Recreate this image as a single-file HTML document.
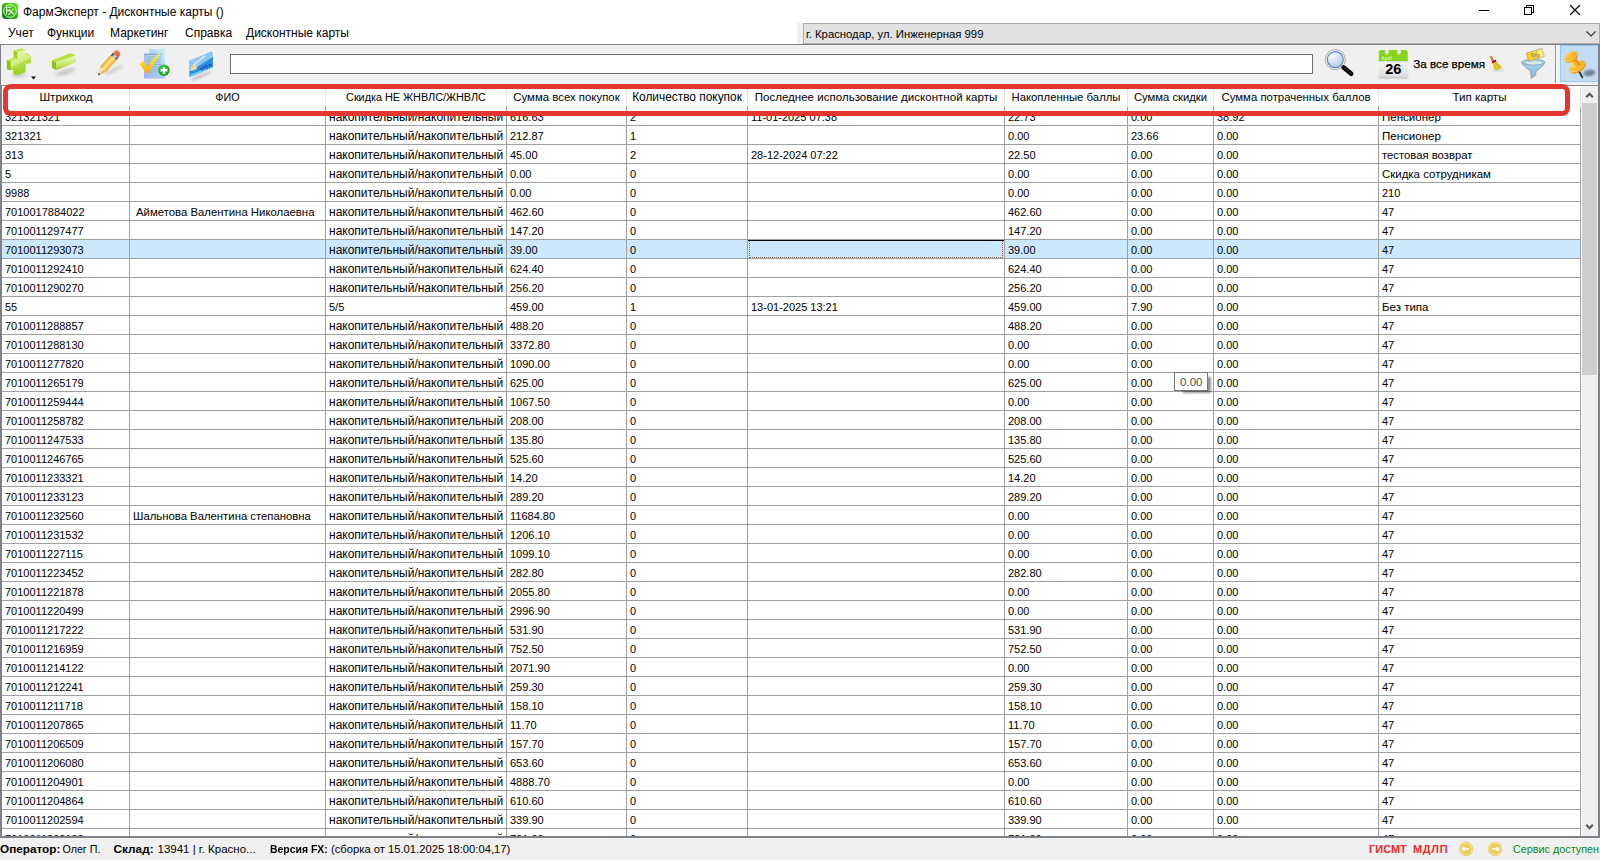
<!DOCTYPE html>
<html><head><meta charset="utf-8"><style>
*{margin:0;padding:0;box-sizing:border-box}
html,body{width:1600px;height:860px;overflow:hidden;background:#fff;font-family:"Liberation Sans",sans-serif;color:#000}
.a{position:absolute}
.t{position:absolute;white-space:pre;line-height:1}
.hl{position:absolute;height:1px;background:#a0a0a0}
.vl{position:absolute;width:1px;background:#a0a0a0}
</style></head><body>
<svg class="a" style="left:2px;top:3px" width="16" height="16" viewBox="0 0 16 16">
<defs><linearGradient id="gi" x1="0" y1="1" x2="1" y2="0"><stop offset="0" stop-color="#067a06"/><stop offset="1" stop-color="#5cf20c"/></linearGradient></defs>
<rect x="0" y="0" width="16" height="16" rx="3.5" fill="url(#gi)"/>
<circle cx="8" cy="8" r="6.3" fill="none" stroke="#e8f0e8" stroke-width="1"/>
<path d="M4.6 11.5V4.3H9.8M4.6 7.6H7.2M6.3 12L12 5.5M6.8 6.5L11.8 11.5" fill="none" stroke="#e8f0e8" stroke-width="1.1"/>
</svg>
<div class="t" style="left:23px;top:6px;font-size:12px">ФармЭксперт - Дисконтные карты ()</div>
<div class="a" style="left:1479px;top:10px;width:10px;height:1px;background:#000"></div>
<svg class="a" style="left:1524px;top:5px" width="10" height="10" viewBox="0 0 10 10"><path d="M0.5 2.5h7v7h-7z M2.5 2.5v-2h7v7h-2" fill="none" stroke="#000" stroke-width="1" shape-rendering="crispEdges"/></svg>
<svg class="a" style="left:1569px;top:4px" width="12" height="12" viewBox="0 0 12 12"><path d="M1 1L11 11M11 1L1 11" stroke="#000" stroke-width="1.1"/></svg>
<div class="t" style="left:8px;top:27px;font-size:12px">Учет</div>
<div class="t" style="left:47px;top:27px;font-size:12px">Функции</div>
<div class="t" style="left:110px;top:27px;font-size:12px">Маркетинг</div>
<div class="t" style="left:185px;top:27px;font-size:12px">Справка</div>
<div class="t" style="left:246px;top:27px;font-size:12px">Дисконтные карты</div>
<div class="a" style="left:797px;top:23px;width:6px;height:21px;background:#f0f0f0"></div>
<div class="a" style="left:803px;top:23px;width:797px;height:21px;background:#e1e1e1;border:1px solid #adadad"></div>
<div class="t" style="left:806px;top:29px;font-size:11.3px">г. Краснодар, ул. Инженерная 999</div>
<svg class="a" style="left:1586px;top:31px" width="10" height="6" viewBox="0 0 10 6"><path d="M0.5 0.5L5 5L9.5 0.5" fill="none" stroke="#333" stroke-width="1.1"/></svg>
<div class="a" style="left:0;top:44px;width:1600px;height:1px;background:#7d828a"></div>
<div class="a" style="left:0;top:45px;width:1600px;height:40px;background:#f0f0f0"></div>
<div class="a" style="left:230px;top:54px;width:1083px;height:20px;background:#fff;border:1px solid #6e6e6e"></div>
<div class="a" style="left:1555px;top:45px;width:1px;height:38px;background:#8c8c8c"></div>
<div class="a" style="left:1556px;top:45px;width:1px;height:38px;background:#fff"></div>
<div class="a" style="left:1560px;top:45px;width:39px;height:37px;background:#c4dcf2;border:1px solid #92c8f5"></div>
<svg class="a" style="left:4px;top:46px" width="36" height="36" viewBox="0 0 36 36">
<defs>
<linearGradient id="pf" x1="0" y1="0" x2="0.35" y2="1"><stop offset="0" stop-color="#f0fbc4"/><stop offset="0.6" stop-color="#cfec7c"/><stop offset="0.62" stop-color="#b8df50"/><stop offset="1" stop-color="#9ccc26"/></linearGradient>
<filter id="bl1" x="-50%" y="-50%" width="200%" height="200%"><feGaussianBlur stdDeviation="1.6"/></filter>
</defs>
<ellipse cx="15" cy="29" rx="7" ry="2" fill="#000" opacity="0.18" filter="url(#bl1)"/>
<g fill="#a2d21e">
<path id="crs" d="M13.4 5.9L20.9 3.6V8L26.8 10V16.7L21.3 18.4V26L13 29.3V21.8L6.7 24.3V15.5L13.4 12.6Z"/>
<use href="#crs" x="-1" y="-0.3"/><use href="#crs" x="-2" y="-0.6"/><use href="#crs" x="-3" y="-0.85"/><use href="#crs" x="-3.8" y="-1.1"/>
</g>
<path d="M9.6 4.8L17.1 2.5L20.9 3.6L13.4 5.9Z M2.9 14.4L9.6 11.5L13.4 12.6L6.7 15.5Z M20.9 8L23 7L26.8 10Z" fill="#c6e85a"/>
<path d="M2.9 14.4L6.7 15.5V24.3L2.9 23.2Z" fill="#8cc212"/>
<path d="M13.4 5.9L20.9 3.6V8L26.8 10V16.7L21.3 18.4V26L13 29.3V21.8L6.7 24.3V15.5L13.4 12.6Z" fill="url(#pf)"/>
<path d="M27 30.5h5l-2.5 3z" fill="#000"/>
</svg>
<svg class="a" style="left:48px;top:46px" width="36" height="36" viewBox="0 0 36 36">
<defs>
<linearGradient id="mf" x1="0" y1="0" x2="0.15" y2="1"><stop offset="0" stop-color="#c6e866"/><stop offset="0.2" stop-color="#eafab8"/><stop offset="0.55" stop-color="#cdec7a"/><stop offset="1" stop-color="#9ccd24"/></linearGradient>
<filter id="bl2" x="-50%" y="-50%" width="200%" height="200%"><feGaussianBlur stdDeviation="1.8"/></filter>
</defs>
<ellipse cx="17.5" cy="26" rx="11" ry="2.4" transform="rotate(-17 17.5 26)" fill="#000" opacity="0.17" filter="url(#bl2)"/>
<path d="M4 14.2L8.2 16.3V24.3L4 21.8Z" fill="#8fc312"/>
<path d="M4 14.2L22.8 7.1L27.8 9.4L8.2 16.3Z" fill="#b7e03c"/>
<path d="M8.2 16.3L27.8 9.4V16.3L8.2 24.3Z" fill="url(#mf)"/>
</svg>
<svg class="a" style="left:94px;top:46px" width="36" height="36" viewBox="0 0 36 36">
<defs>
<linearGradient id="pb" x1="0" y1="0" x2="0" y2="1"><stop offset="0" stop-color="#e9a612"/><stop offset="0.45" stop-color="#fde58e"/><stop offset="1" stop-color="#e8aa1a"/></linearGradient>
<linearGradient id="pm" x1="0" y1="0" x2="0" y2="1"><stop offset="0" stop-color="#2a2a2a"/><stop offset="0.5" stop-color="#e0e0e0"/><stop offset="1" stop-color="#3a3a3a"/></linearGradient>
<filter id="bl3" x="-50%" y="-50%" width="200%" height="200%"><feGaussianBlur stdDeviation="1.5"/></filter>
</defs>
<ellipse cx="20" cy="24" rx="10" ry="1.8" transform="rotate(-28 20 24)" fill="#000" opacity="0.16" filter="url(#bl3)"/>
<g transform="translate(4 29.3) rotate(-48.6)">
<path d="M0 0L7.5 -3.7V3.7Z" fill="#f4ddb0"/>
<path d="M0 0L7.5 1V3.7Z" fill="#d9b070"/>
<path d="M0 0L2.2 -1.1V1.1Z" fill="#222"/>
<rect x="7.5" y="-3.9" width="16" height="7.8" fill="url(#pb)"/>
<rect x="23.5" y="-3.7" width="3.3" height="7.4" fill="url(#pm)"/>
<path d="M26.5 -3.6H28.6Q31.6 -3.6 31.6 0Q31.6 3.6 28.6 3.6H26.5Z" fill="#dc7450"/><path d="M27 -3.2H29Q31 -3.2 31.2 -1.5" stroke="#f4b090" stroke-width="0.8" fill="none"/>
</g>
</svg>
<svg class="a" style="left:136px;top:46px" width="36" height="36" viewBox="0 0 36 36">
<defs>
<linearGradient id="dg" x1="1" y1="0" x2="0" y2="1"><stop offset="0" stop-color="#c2f4fb"/><stop offset="0.5" stop-color="#a9cdf2"/><stop offset="1" stop-color="#a4aaf8"/></linearGradient>
<linearGradient id="ck" x1="0" y1="0" x2="0" y2="1"><stop offset="0" stop-color="#ffee40"/><stop offset="0.5" stop-color="#ffd814"/><stop offset="1" stop-color="#ffa400"/></linearGradient>
<radialGradient id="gc" cx="0.4" cy="0.35" r="0.7"><stop offset="0" stop-color="#3cd33c"/><stop offset="1" stop-color="#0c9a14"/></radialGradient>
</defs>
<path d="M13.4 2.9H28.9V32.6H8V8Z" fill="url(#dg)"/>
<path d="M13.4 2.9V8H8Z" fill="#dff3fb"/>
<path d="M8 8.2H25.7" stroke="#6f8fa8" stroke-width="0.9"/>
<g stroke="#8faccc" stroke-width="0.8"><path d="M11 11H25.7M11 13.7H25.7M11 16H25.7M11 18.5H25.7M11 21H25.7M11 23.5H25.7M11 26H25.7"/></g>
<path d="M3.8 18.2L7 14.8L11.4 21L16.4 13.8L23.3 6.9L25.2 5.9L21.2 12.5L17.8 18L12.8 27.2L10 26.8Z" fill="url(#ck)"/>
<circle cx="28" cy="24.3" r="5.7" fill="url(#gc)"/>
<path d="M24.5 24.3H31.5M28 20.8V27.8" stroke="#fff" stroke-width="2.4"/>
</svg>
<svg class="a" style="left:184px;top:46px" width="36" height="36" viewBox="0 0 36 36">
<defs>
<linearGradient id="cg" x1="0" y1="0" x2="0.25" y2="1"><stop offset="0" stop-color="#a9d4f4"/><stop offset="0.42" stop-color="#7cbcec"/><stop offset="0.5" stop-color="#2c8ee0"/><stop offset="1" stop-color="#1c86dc"/></linearGradient>
<filter id="bl4" x="-50%" y="-50%" width="200%" height="200%"><feGaussianBlur stdDeviation="1.2"/></filter>
</defs>
<ellipse cx="17" cy="30" rx="11" ry="2" transform="rotate(-22 17 30)" fill="#000" opacity="0.15" filter="url(#bl4)"/>
<path d="M5 14.65L27.2 5.4L28.9 6.7V21.3L5.9 31L5 30.1Z" fill="#8ec6f0"/>
<path d="M5.6 25.6L28.9 11V21.3L5.9 31L5.6 30.5Z" fill="#2a8fe2"/>
<path d="M5.6 29L28.9 19.5V21.3L5.9 31Z" fill="#62d0ff"/>
<path d="M9 19.5L21 9.6" stroke="#ffffff" stroke-opacity="0.7" stroke-width="1.4"/>
<path d="M7.1 20.6L12.7 18.3V23L7.1 25.3Z" fill="#f2d68a"/>
<text x="22" y="23" text-anchor="middle" font-family="Liberation Sans" font-size="5.5" font-weight="bold" fill="#1a3aa8" transform="rotate(-22 22 21)">VISA</text>
</svg>
<svg class="a" style="left:1320px;top:46px" width="36" height="36" viewBox="0 0 36 36">
<defs>
<radialGradient id="lg" cx="0.35" cy="0.3" r="0.75"><stop offset="0" stop-color="#f6f9fe"/><stop offset="1" stop-color="#b5c9e6"/></radialGradient>
</defs>
<circle cx="15.3" cy="13.6" r="10" fill="#f4f4f4" stroke="#a8a8a8" stroke-width="1"/>
<circle cx="15.3" cy="13.6" r="8" fill="url(#lg)" stroke="#5a88cc" stroke-width="1.1"/>
<path d="M23.6 21.5L31.2 27.8" stroke="#000" stroke-width="4.6" stroke-linecap="round"/>
<path d="M24.4 21.6L30.6 26.8" stroke="#fff" stroke-width="0.6" stroke-dasharray="1 0.8" opacity="0.7"/>
</svg>
<svg class="a" style="left:1374px;top:46px" width="36" height="36" viewBox="0 0 36 36">
<defs>
<linearGradient id="kg" x1="0" y1="0" x2="0" y2="1"><stop offset="0" stop-color="#d8d8d8"/><stop offset="0.15" stop-color="#f2f2f2"/><stop offset="1" stop-color="#dcdcdc"/></linearGradient>
<filter id="bl5" x="-50%" y="-50%" width="200%" height="200%"><feGaussianBlur stdDeviation="0.8"/></filter>
</defs>
<rect x="4.5" y="30.2" width="29.5" height="2" fill="#000" opacity="0.25" filter="url(#bl5)"/>
<rect x="4.8" y="15" width="29" height="15.8" fill="url(#kg)"/>
<path d="M4.8 15V6.5Q4.8 4 7.3 4H31.3Q33.8 4 33.8 6.5V15Z" fill="#86d61e"/>
<rect x="11.3" y="3.2" width="3.3" height="5.2" rx="1.6" fill="#f4f0f6"/>
<rect x="23.4" y="3.2" width="3.3" height="5.2" rx="1.6" fill="#f4f0f6"/>
<text x="7.5" y="13.6" font-family="Liberation Sans" font-size="4.5" font-weight="bold" fill="#e8f8d0" opacity="0.85">April</text>
<text x="19.2" y="27.8" text-anchor="middle" font-family="Liberation Sans" font-size="14.5" font-weight="bold" fill="#000">26</text>
</svg>
<svg class="a" style="left:1484px;top:46px" width="66" height="36" viewBox="0 0 66 36">
<defs>
<linearGradient id="fg" x1="0" y1="0" x2="0" y2="1"><stop offset="0" stop-color="#a9d4ec"/><stop offset="1" stop-color="#7cb8de"/></linearGradient>
<linearGradient id="tg" x1="0" y1="0" x2="1" y2="0"><stop offset="0" stop-color="#ffc000"/><stop offset="1" stop-color="#fffd9a"/></linearGradient>
<filter id="bl6" x="-50%" y="-50%" width="200%" height="200%"><feGaussianBlur stdDeviation="0.8"/></filter>
</defs>
<ellipse cx="14" cy="23.5" rx="5" ry="1.5" fill="#000" opacity="0.15" filter="url(#bl6)"/>
<path d="M7.2 11.2L9.6 15.6" stroke="#c48c44" stroke-width="2.6" stroke-linecap="round"/>
<path d="M7.8 15.2L11.8 13.6L12.5 16.1L8.5 17.7Z" fill="#c4101c"/>
<path d="M8.4 17.5L12.4 15.9L18 20.9L16.4 22.6L11.6 24.6L10 22.6Z" fill="#eccc22"/>
<path d="M10.5 18.5L12.5 23.5M12.5 17.5L15 22.5M14.5 17.8L17 21.5" stroke="#c8a814" stroke-width="0.6"/>
<path d="M37.6 16.2Q38 19 43 22.5Q46 24.5 46.6 26.5L47.2 32.6L51.8 29.2V26.3Q52.5 24.5 55.6 22.5Q60.6 19 61 16.2Z" fill="url(#fg)" stroke="#8e9ca4" stroke-width="0.8"/>
<ellipse cx="49.3" cy="16.2" rx="11.7" ry="2.8" fill="#a4d0ea" stroke="#8e9ca4" stroke-width="0.8"/>
<ellipse cx="50" cy="16.8" rx="8.2" ry="1.6" fill="#e2e6ea"/>
<path d="M42.3 7.1L57.8 2.5L60.3 10.5L44.8 15.5Z" fill="url(#tg)" stroke="#a0a080" stroke-width="0.7"/>
<text x="51.3" y="12.6" text-anchor="middle" font-family="Liberation Sans" font-size="9.5" font-weight="bold" fill="#a09a50" transform="rotate(-17 51.3 9)">%</text>
</svg>
<svg class="a" style="left:1562px;top:46px" width="36" height="36" viewBox="0 0 36 36">
<defs>
<linearGradient id="og" x1="0" y1="0" x2="1" y2="1"><stop offset="0" stop-color="#ffd048"/><stop offset="1" stop-color="#f8a418"/></linearGradient>
<linearGradient id="ng" x1="0" y1="0" x2="1" y2="0"><stop offset="0" stop-color="#ffe070"/><stop offset="0.5" stop-color="#f4b028"/><stop offset="1" stop-color="#e48a10"/></linearGradient>
<filter id="bl7" x="-50%" y="-50%" width="200%" height="200%"><feGaussianBlur stdDeviation="1"/></filter>
</defs>
<ellipse cx="27.5" cy="27" rx="6" ry="3.3" transform="rotate(-8 27.5 27)" fill="#4e5e6c" opacity="0.7" filter="url(#bl7)"/>
<path d="M17.2 25.5L20.7 32" stroke="#1e2444" stroke-width="1.6"/>
<g transform="rotate(-33 12 16)">
<ellipse cx="12.3" cy="23" rx="8.9" ry="4.4" fill="#ec9412"/>
<ellipse cx="12.3" cy="21.6" rx="8.9" ry="4.2" fill="url(#og)"/>
<rect x="8.6" y="10" width="7.4" height="11.5" fill="url(#ng)"/>
<ellipse cx="12.3" cy="11" rx="7.4" ry="4" fill="#ef9c18"/>
<ellipse cx="12.3" cy="9.8" rx="7.4" ry="3.9" fill="url(#og)"/>
<path d="M4.9 10.6Q12.3 15.5 19.7 10.6M3.5 22.4Q12.3 28 21.2 22.4" stroke="#fff3d0" stroke-width="0.7" stroke-dasharray="0.8 0.6" fill="none"/>
</g>
</svg>

<div class="t" style="left:1413.3px;top:58px;font-size:11.65px;-webkit-text-stroke:0.25px #000">За все время</div>
<div class="a" style="left:2px;top:240px;width:1578px;height:18px;background:#cce8ff"></div>
<div class="hl" style="left:2px;top:125px;width:1578px"></div>
<div class="hl" style="left:2px;top:144px;width:1578px"></div>
<div class="hl" style="left:2px;top:163px;width:1578px"></div>
<div class="hl" style="left:2px;top:182px;width:1578px"></div>
<div class="hl" style="left:2px;top:201px;width:1578px"></div>
<div class="hl" style="left:2px;top:220px;width:1578px"></div>
<div class="hl" style="left:2px;top:239px;width:1578px"></div>
<div class="hl" style="left:2px;top:258px;width:1578px"></div>
<div class="hl" style="left:2px;top:277px;width:1578px"></div>
<div class="hl" style="left:2px;top:296px;width:1578px"></div>
<div class="hl" style="left:2px;top:315px;width:1578px"></div>
<div class="hl" style="left:2px;top:334px;width:1578px"></div>
<div class="hl" style="left:2px;top:353px;width:1578px"></div>
<div class="hl" style="left:2px;top:372px;width:1578px"></div>
<div class="hl" style="left:2px;top:391px;width:1578px"></div>
<div class="hl" style="left:2px;top:410px;width:1578px"></div>
<div class="hl" style="left:2px;top:429px;width:1578px"></div>
<div class="hl" style="left:2px;top:448px;width:1578px"></div>
<div class="hl" style="left:2px;top:467px;width:1578px"></div>
<div class="hl" style="left:2px;top:486px;width:1578px"></div>
<div class="hl" style="left:2px;top:505px;width:1578px"></div>
<div class="hl" style="left:2px;top:524px;width:1578px"></div>
<div class="hl" style="left:2px;top:543px;width:1578px"></div>
<div class="hl" style="left:2px;top:562px;width:1578px"></div>
<div class="hl" style="left:2px;top:581px;width:1578px"></div>
<div class="hl" style="left:2px;top:600px;width:1578px"></div>
<div class="hl" style="left:2px;top:619px;width:1578px"></div>
<div class="hl" style="left:2px;top:638px;width:1578px"></div>
<div class="hl" style="left:2px;top:657px;width:1578px"></div>
<div class="hl" style="left:2px;top:676px;width:1578px"></div>
<div class="hl" style="left:2px;top:695px;width:1578px"></div>
<div class="hl" style="left:2px;top:714px;width:1578px"></div>
<div class="hl" style="left:2px;top:733px;width:1578px"></div>
<div class="hl" style="left:2px;top:752px;width:1578px"></div>
<div class="hl" style="left:2px;top:771px;width:1578px"></div>
<div class="hl" style="left:2px;top:790px;width:1578px"></div>
<div class="hl" style="left:2px;top:809px;width:1578px"></div>
<div class="hl" style="left:2px;top:828px;width:1578px"></div>
<div class="vl" style="left:129px;top:107px;height:729px"></div>
<div class="vl" style="left:325px;top:107px;height:729px"></div>
<div class="vl" style="left:506px;top:107px;height:729px"></div>
<div class="vl" style="left:626px;top:107px;height:729px"></div>
<div class="vl" style="left:747px;top:107px;height:729px"></div>
<div class="vl" style="left:1004px;top:107px;height:729px"></div>
<div class="vl" style="left:1127px;top:107px;height:729px"></div>
<div class="vl" style="left:1213px;top:107px;height:729px"></div>
<div class="vl" style="left:1378px;top:107px;height:729px"></div>
<div class="vl" style="left:1580px;top:107px;height:729px"></div>
<div class="t" style="left:5px;top:112px;font-size:11.0px">321321321</div>
<div class="t" style="left:329px;top:111px;font-size:12.0px">накопительный/накопительный</div>
<div class="t" style="left:510px;top:112px;font-size:11.0px">616.63</div>
<div class="t" style="left:630px;top:112px;font-size:11.0px">2</div>
<div class="t" style="left:751px;top:112px;font-size:11.0px">11-01-2025 07:38</div>
<div class="t" style="left:1008px;top:112px;font-size:11.0px">22.73</div>
<div class="t" style="left:1131px;top:112px;font-size:11.0px">0.00</div>
<div class="t" style="left:1217px;top:112px;font-size:11.0px">38.92</div>
<div class="t" style="left:1382px;top:112px;font-size:11.55px">Пенсионер</div>
<div class="t" style="left:5px;top:131px;font-size:11.0px">321321</div>
<div class="t" style="left:329px;top:130px;font-size:12.0px">накопительный/накопительный</div>
<div class="t" style="left:510px;top:131px;font-size:11.0px">212.87</div>
<div class="t" style="left:630px;top:131px;font-size:11.0px">1</div>
<div class="t" style="left:1008px;top:131px;font-size:11.0px">0.00</div>
<div class="t" style="left:1131px;top:131px;font-size:11.0px">23.66</div>
<div class="t" style="left:1217px;top:131px;font-size:11.0px">0.00</div>
<div class="t" style="left:1382px;top:131px;font-size:11.55px">Пенсионер</div>
<div class="t" style="left:5px;top:150px;font-size:11.0px">313</div>
<div class="t" style="left:329px;top:149px;font-size:12.0px">накопительный/накопительный</div>
<div class="t" style="left:510px;top:150px;font-size:11.0px">45.00</div>
<div class="t" style="left:630px;top:150px;font-size:11.0px">2</div>
<div class="t" style="left:751px;top:150px;font-size:11.0px">28-12-2024 07:22</div>
<div class="t" style="left:1008px;top:150px;font-size:11.0px">22.50</div>
<div class="t" style="left:1131px;top:150px;font-size:11.0px">0.00</div>
<div class="t" style="left:1217px;top:150px;font-size:11.0px">0.00</div>
<div class="t" style="left:1382px;top:150px;font-size:11.3px">тестовая возврат</div>
<div class="t" style="left:5px;top:169px;font-size:11.0px">5</div>
<div class="t" style="left:329px;top:168px;font-size:12.0px">накопительный/накопительный</div>
<div class="t" style="left:510px;top:169px;font-size:11.0px">0.00</div>
<div class="t" style="left:630px;top:169px;font-size:11.0px">0</div>
<div class="t" style="left:1008px;top:169px;font-size:11.0px">0.00</div>
<div class="t" style="left:1131px;top:169px;font-size:11.0px">0.00</div>
<div class="t" style="left:1217px;top:169px;font-size:11.0px">0.00</div>
<div class="t" style="left:1382px;top:169px;font-size:11.46px">Скидка сотрудникам</div>
<div class="t" style="left:5px;top:188px;font-size:11.0px">9988</div>
<div class="t" style="left:329px;top:187px;font-size:12.0px">накопительный/накопительный</div>
<div class="t" style="left:510px;top:188px;font-size:11.0px">0.00</div>
<div class="t" style="left:630px;top:188px;font-size:11.0px">0</div>
<div class="t" style="left:1008px;top:188px;font-size:11.0px">0.00</div>
<div class="t" style="left:1131px;top:188px;font-size:11.0px">0.00</div>
<div class="t" style="left:1217px;top:188px;font-size:11.0px">0.00</div>
<div class="t" style="left:1382px;top:188px;font-size:11.0px">210</div>
<div class="t" style="left:5px;top:207px;font-size:11.0px">7010017884022</div>
<div class="t" style="left:136px;top:207px;font-size:11.36px">Айметова Валентина Николаевна</div>
<div class="t" style="left:329px;top:206px;font-size:12.0px">накопительный/накопительный</div>
<div class="t" style="left:510px;top:207px;font-size:11.0px">462.60</div>
<div class="t" style="left:630px;top:207px;font-size:11.0px">0</div>
<div class="t" style="left:1008px;top:207px;font-size:11.0px">462.60</div>
<div class="t" style="left:1131px;top:207px;font-size:11.0px">0.00</div>
<div class="t" style="left:1217px;top:207px;font-size:11.0px">0.00</div>
<div class="t" style="left:1382px;top:207px;font-size:11.0px">47</div>
<div class="t" style="left:5px;top:226px;font-size:11.0px">7010011297477</div>
<div class="t" style="left:329px;top:225px;font-size:12.0px">накопительный/накопительный</div>
<div class="t" style="left:510px;top:226px;font-size:11.0px">147.20</div>
<div class="t" style="left:630px;top:226px;font-size:11.0px">0</div>
<div class="t" style="left:1008px;top:226px;font-size:11.0px">147.20</div>
<div class="t" style="left:1131px;top:226px;font-size:11.0px">0.00</div>
<div class="t" style="left:1217px;top:226px;font-size:11.0px">0.00</div>
<div class="t" style="left:1382px;top:226px;font-size:11.0px">47</div>
<div class="t" style="left:5px;top:245px;font-size:11.0px">7010011293073</div>
<div class="t" style="left:329px;top:244px;font-size:12.0px">накопительный/накопительный</div>
<div class="t" style="left:510px;top:245px;font-size:11.0px">39.00</div>
<div class="t" style="left:630px;top:245px;font-size:11.0px">0</div>
<div class="t" style="left:1008px;top:245px;font-size:11.0px">39.00</div>
<div class="t" style="left:1131px;top:245px;font-size:11.0px">0.00</div>
<div class="t" style="left:1217px;top:245px;font-size:11.0px">0.00</div>
<div class="t" style="left:1382px;top:245px;font-size:11.0px">47</div>
<div class="t" style="left:5px;top:264px;font-size:11.0px">7010011292410</div>
<div class="t" style="left:329px;top:263px;font-size:12.0px">накопительный/накопительный</div>
<div class="t" style="left:510px;top:264px;font-size:11.0px">624.40</div>
<div class="t" style="left:630px;top:264px;font-size:11.0px">0</div>
<div class="t" style="left:1008px;top:264px;font-size:11.0px">624.40</div>
<div class="t" style="left:1131px;top:264px;font-size:11.0px">0.00</div>
<div class="t" style="left:1217px;top:264px;font-size:11.0px">0.00</div>
<div class="t" style="left:1382px;top:264px;font-size:11.0px">47</div>
<div class="t" style="left:5px;top:283px;font-size:11.0px">7010011290270</div>
<div class="t" style="left:329px;top:282px;font-size:12.0px">накопительный/накопительный</div>
<div class="t" style="left:510px;top:283px;font-size:11.0px">256.20</div>
<div class="t" style="left:630px;top:283px;font-size:11.0px">0</div>
<div class="t" style="left:1008px;top:283px;font-size:11.0px">256.20</div>
<div class="t" style="left:1131px;top:283px;font-size:11.0px">0.00</div>
<div class="t" style="left:1217px;top:283px;font-size:11.0px">0.00</div>
<div class="t" style="left:1382px;top:283px;font-size:11.0px">47</div>
<div class="t" style="left:5px;top:302px;font-size:11.0px">55</div>
<div class="t" style="left:329px;top:302px;font-size:11.0px">5/5</div>
<div class="t" style="left:510px;top:302px;font-size:11.0px">459.00</div>
<div class="t" style="left:630px;top:302px;font-size:11.0px">1</div>
<div class="t" style="left:751px;top:302px;font-size:11.0px">13-01-2025 13:21</div>
<div class="t" style="left:1008px;top:302px;font-size:11.0px">459.00</div>
<div class="t" style="left:1131px;top:302px;font-size:11.0px">7.90</div>
<div class="t" style="left:1217px;top:302px;font-size:11.0px">0.00</div>
<div class="t" style="left:1382px;top:302px;font-size:11.5px">Без типа</div>
<div class="t" style="left:5px;top:321px;font-size:11.0px">7010011288857</div>
<div class="t" style="left:329px;top:320px;font-size:12.0px">накопительный/накопительный</div>
<div class="t" style="left:510px;top:321px;font-size:11.0px">488.20</div>
<div class="t" style="left:630px;top:321px;font-size:11.0px">0</div>
<div class="t" style="left:1008px;top:321px;font-size:11.0px">488.20</div>
<div class="t" style="left:1131px;top:321px;font-size:11.0px">0.00</div>
<div class="t" style="left:1217px;top:321px;font-size:11.0px">0.00</div>
<div class="t" style="left:1382px;top:321px;font-size:11.0px">47</div>
<div class="t" style="left:5px;top:340px;font-size:11.0px">7010011288130</div>
<div class="t" style="left:329px;top:339px;font-size:12.0px">накопительный/накопительный</div>
<div class="t" style="left:510px;top:340px;font-size:11.0px">3372.80</div>
<div class="t" style="left:630px;top:340px;font-size:11.0px">0</div>
<div class="t" style="left:1008px;top:340px;font-size:11.0px">0.00</div>
<div class="t" style="left:1131px;top:340px;font-size:11.0px">0.00</div>
<div class="t" style="left:1217px;top:340px;font-size:11.0px">0.00</div>
<div class="t" style="left:1382px;top:340px;font-size:11.0px">47</div>
<div class="t" style="left:5px;top:359px;font-size:11.0px">7010011277820</div>
<div class="t" style="left:329px;top:358px;font-size:12.0px">накопительный/накопительный</div>
<div class="t" style="left:510px;top:359px;font-size:11.0px">1090.00</div>
<div class="t" style="left:630px;top:359px;font-size:11.0px">0</div>
<div class="t" style="left:1008px;top:359px;font-size:11.0px">0.00</div>
<div class="t" style="left:1131px;top:359px;font-size:11.0px">0.00</div>
<div class="t" style="left:1217px;top:359px;font-size:11.0px">0.00</div>
<div class="t" style="left:1382px;top:359px;font-size:11.0px">47</div>
<div class="t" style="left:5px;top:378px;font-size:11.0px">7010011265179</div>
<div class="t" style="left:329px;top:377px;font-size:12.0px">накопительный/накопительный</div>
<div class="t" style="left:510px;top:378px;font-size:11.0px">625.00</div>
<div class="t" style="left:630px;top:378px;font-size:11.0px">0</div>
<div class="t" style="left:1008px;top:378px;font-size:11.0px">625.00</div>
<div class="t" style="left:1131px;top:378px;font-size:11.0px">0.00</div>
<div class="t" style="left:1217px;top:378px;font-size:11.0px">0.00</div>
<div class="t" style="left:1382px;top:378px;font-size:11.0px">47</div>
<div class="t" style="left:5px;top:397px;font-size:11.0px">7010011259444</div>
<div class="t" style="left:329px;top:396px;font-size:12.0px">накопительный/накопительный</div>
<div class="t" style="left:510px;top:397px;font-size:11.0px">1067.50</div>
<div class="t" style="left:630px;top:397px;font-size:11.0px">0</div>
<div class="t" style="left:1008px;top:397px;font-size:11.0px">0.00</div>
<div class="t" style="left:1131px;top:397px;font-size:11.0px">0.00</div>
<div class="t" style="left:1217px;top:397px;font-size:11.0px">0.00</div>
<div class="t" style="left:1382px;top:397px;font-size:11.0px">47</div>
<div class="t" style="left:5px;top:416px;font-size:11.0px">7010011258782</div>
<div class="t" style="left:329px;top:415px;font-size:12.0px">накопительный/накопительный</div>
<div class="t" style="left:510px;top:416px;font-size:11.0px">208.00</div>
<div class="t" style="left:630px;top:416px;font-size:11.0px">0</div>
<div class="t" style="left:1008px;top:416px;font-size:11.0px">208.00</div>
<div class="t" style="left:1131px;top:416px;font-size:11.0px">0.00</div>
<div class="t" style="left:1217px;top:416px;font-size:11.0px">0.00</div>
<div class="t" style="left:1382px;top:416px;font-size:11.0px">47</div>
<div class="t" style="left:5px;top:435px;font-size:11.0px">7010011247533</div>
<div class="t" style="left:329px;top:434px;font-size:12.0px">накопительный/накопительный</div>
<div class="t" style="left:510px;top:435px;font-size:11.0px">135.80</div>
<div class="t" style="left:630px;top:435px;font-size:11.0px">0</div>
<div class="t" style="left:1008px;top:435px;font-size:11.0px">135.80</div>
<div class="t" style="left:1131px;top:435px;font-size:11.0px">0.00</div>
<div class="t" style="left:1217px;top:435px;font-size:11.0px">0.00</div>
<div class="t" style="left:1382px;top:435px;font-size:11.0px">47</div>
<div class="t" style="left:5px;top:454px;font-size:11.0px">7010011246765</div>
<div class="t" style="left:329px;top:453px;font-size:12.0px">накопительный/накопительный</div>
<div class="t" style="left:510px;top:454px;font-size:11.0px">525.60</div>
<div class="t" style="left:630px;top:454px;font-size:11.0px">0</div>
<div class="t" style="left:1008px;top:454px;font-size:11.0px">525.60</div>
<div class="t" style="left:1131px;top:454px;font-size:11.0px">0.00</div>
<div class="t" style="left:1217px;top:454px;font-size:11.0px">0.00</div>
<div class="t" style="left:1382px;top:454px;font-size:11.0px">47</div>
<div class="t" style="left:5px;top:473px;font-size:11.0px">7010011233321</div>
<div class="t" style="left:329px;top:472px;font-size:12.0px">накопительный/накопительный</div>
<div class="t" style="left:510px;top:473px;font-size:11.0px">14.20</div>
<div class="t" style="left:630px;top:473px;font-size:11.0px">0</div>
<div class="t" style="left:1008px;top:473px;font-size:11.0px">14.20</div>
<div class="t" style="left:1131px;top:473px;font-size:11.0px">0.00</div>
<div class="t" style="left:1217px;top:473px;font-size:11.0px">0.00</div>
<div class="t" style="left:1382px;top:473px;font-size:11.0px">47</div>
<div class="t" style="left:5px;top:492px;font-size:11.0px">7010011233123</div>
<div class="t" style="left:329px;top:491px;font-size:12.0px">накопительный/накопительный</div>
<div class="t" style="left:510px;top:492px;font-size:11.0px">289.20</div>
<div class="t" style="left:630px;top:492px;font-size:11.0px">0</div>
<div class="t" style="left:1008px;top:492px;font-size:11.0px">289.20</div>
<div class="t" style="left:1131px;top:492px;font-size:11.0px">0.00</div>
<div class="t" style="left:1217px;top:492px;font-size:11.0px">0.00</div>
<div class="t" style="left:1382px;top:492px;font-size:11.0px">47</div>
<div class="t" style="left:5px;top:511px;font-size:11.0px">7010011232560</div>
<div class="t" style="left:133px;top:511px;font-size:11.33px">Шальнова Валентина степановна</div>
<div class="t" style="left:329px;top:510px;font-size:12.0px">накопительный/накопительный</div>
<div class="t" style="left:510px;top:511px;font-size:11.0px">11684.80</div>
<div class="t" style="left:630px;top:511px;font-size:11.0px">0</div>
<div class="t" style="left:1008px;top:511px;font-size:11.0px">0.00</div>
<div class="t" style="left:1131px;top:511px;font-size:11.0px">0.00</div>
<div class="t" style="left:1217px;top:511px;font-size:11.0px">0.00</div>
<div class="t" style="left:1382px;top:511px;font-size:11.0px">47</div>
<div class="t" style="left:5px;top:530px;font-size:11.0px">7010011231532</div>
<div class="t" style="left:329px;top:529px;font-size:12.0px">накопительный/накопительный</div>
<div class="t" style="left:510px;top:530px;font-size:11.0px">1206.10</div>
<div class="t" style="left:630px;top:530px;font-size:11.0px">0</div>
<div class="t" style="left:1008px;top:530px;font-size:11.0px">0.00</div>
<div class="t" style="left:1131px;top:530px;font-size:11.0px">0.00</div>
<div class="t" style="left:1217px;top:530px;font-size:11.0px">0.00</div>
<div class="t" style="left:1382px;top:530px;font-size:11.0px">47</div>
<div class="t" style="left:5px;top:549px;font-size:11.0px">7010011227115</div>
<div class="t" style="left:329px;top:548px;font-size:12.0px">накопительный/накопительный</div>
<div class="t" style="left:510px;top:549px;font-size:11.0px">1099.10</div>
<div class="t" style="left:630px;top:549px;font-size:11.0px">0</div>
<div class="t" style="left:1008px;top:549px;font-size:11.0px">0.00</div>
<div class="t" style="left:1131px;top:549px;font-size:11.0px">0.00</div>
<div class="t" style="left:1217px;top:549px;font-size:11.0px">0.00</div>
<div class="t" style="left:1382px;top:549px;font-size:11.0px">47</div>
<div class="t" style="left:5px;top:568px;font-size:11.0px">7010011223452</div>
<div class="t" style="left:329px;top:567px;font-size:12.0px">накопительный/накопительный</div>
<div class="t" style="left:510px;top:568px;font-size:11.0px">282.80</div>
<div class="t" style="left:630px;top:568px;font-size:11.0px">0</div>
<div class="t" style="left:1008px;top:568px;font-size:11.0px">282.80</div>
<div class="t" style="left:1131px;top:568px;font-size:11.0px">0.00</div>
<div class="t" style="left:1217px;top:568px;font-size:11.0px">0.00</div>
<div class="t" style="left:1382px;top:568px;font-size:11.0px">47</div>
<div class="t" style="left:5px;top:587px;font-size:11.0px">7010011221878</div>
<div class="t" style="left:329px;top:586px;font-size:12.0px">накопительный/накопительный</div>
<div class="t" style="left:510px;top:587px;font-size:11.0px">2055.80</div>
<div class="t" style="left:630px;top:587px;font-size:11.0px">0</div>
<div class="t" style="left:1008px;top:587px;font-size:11.0px">0.00</div>
<div class="t" style="left:1131px;top:587px;font-size:11.0px">0.00</div>
<div class="t" style="left:1217px;top:587px;font-size:11.0px">0.00</div>
<div class="t" style="left:1382px;top:587px;font-size:11.0px">47</div>
<div class="t" style="left:5px;top:606px;font-size:11.0px">7010011220499</div>
<div class="t" style="left:329px;top:605px;font-size:12.0px">накопительный/накопительный</div>
<div class="t" style="left:510px;top:606px;font-size:11.0px">2996.90</div>
<div class="t" style="left:630px;top:606px;font-size:11.0px">0</div>
<div class="t" style="left:1008px;top:606px;font-size:11.0px">0.00</div>
<div class="t" style="left:1131px;top:606px;font-size:11.0px">0.00</div>
<div class="t" style="left:1217px;top:606px;font-size:11.0px">0.00</div>
<div class="t" style="left:1382px;top:606px;font-size:11.0px">47</div>
<div class="t" style="left:5px;top:625px;font-size:11.0px">7010011217222</div>
<div class="t" style="left:329px;top:624px;font-size:12.0px">накопительный/накопительный</div>
<div class="t" style="left:510px;top:625px;font-size:11.0px">531.90</div>
<div class="t" style="left:630px;top:625px;font-size:11.0px">0</div>
<div class="t" style="left:1008px;top:625px;font-size:11.0px">531.90</div>
<div class="t" style="left:1131px;top:625px;font-size:11.0px">0.00</div>
<div class="t" style="left:1217px;top:625px;font-size:11.0px">0.00</div>
<div class="t" style="left:1382px;top:625px;font-size:11.0px">47</div>
<div class="t" style="left:5px;top:644px;font-size:11.0px">7010011216959</div>
<div class="t" style="left:329px;top:643px;font-size:12.0px">накопительный/накопительный</div>
<div class="t" style="left:510px;top:644px;font-size:11.0px">752.50</div>
<div class="t" style="left:630px;top:644px;font-size:11.0px">0</div>
<div class="t" style="left:1008px;top:644px;font-size:11.0px">752.50</div>
<div class="t" style="left:1131px;top:644px;font-size:11.0px">0.00</div>
<div class="t" style="left:1217px;top:644px;font-size:11.0px">0.00</div>
<div class="t" style="left:1382px;top:644px;font-size:11.0px">47</div>
<div class="t" style="left:5px;top:663px;font-size:11.0px">7010011214122</div>
<div class="t" style="left:329px;top:662px;font-size:12.0px">накопительный/накопительный</div>
<div class="t" style="left:510px;top:663px;font-size:11.0px">2071.90</div>
<div class="t" style="left:630px;top:663px;font-size:11.0px">0</div>
<div class="t" style="left:1008px;top:663px;font-size:11.0px">0.00</div>
<div class="t" style="left:1131px;top:663px;font-size:11.0px">0.00</div>
<div class="t" style="left:1217px;top:663px;font-size:11.0px">0.00</div>
<div class="t" style="left:1382px;top:663px;font-size:11.0px">47</div>
<div class="t" style="left:5px;top:682px;font-size:11.0px">7010011212241</div>
<div class="t" style="left:329px;top:681px;font-size:12.0px">накопительный/накопительный</div>
<div class="t" style="left:510px;top:682px;font-size:11.0px">259.30</div>
<div class="t" style="left:630px;top:682px;font-size:11.0px">0</div>
<div class="t" style="left:1008px;top:682px;font-size:11.0px">259.30</div>
<div class="t" style="left:1131px;top:682px;font-size:11.0px">0.00</div>
<div class="t" style="left:1217px;top:682px;font-size:11.0px">0.00</div>
<div class="t" style="left:1382px;top:682px;font-size:11.0px">47</div>
<div class="t" style="left:5px;top:701px;font-size:11.0px">7010011211718</div>
<div class="t" style="left:329px;top:700px;font-size:12.0px">накопительный/накопительный</div>
<div class="t" style="left:510px;top:701px;font-size:11.0px">158.10</div>
<div class="t" style="left:630px;top:701px;font-size:11.0px">0</div>
<div class="t" style="left:1008px;top:701px;font-size:11.0px">158.10</div>
<div class="t" style="left:1131px;top:701px;font-size:11.0px">0.00</div>
<div class="t" style="left:1217px;top:701px;font-size:11.0px">0.00</div>
<div class="t" style="left:1382px;top:701px;font-size:11.0px">47</div>
<div class="t" style="left:5px;top:720px;font-size:11.0px">7010011207865</div>
<div class="t" style="left:329px;top:719px;font-size:12.0px">накопительный/накопительный</div>
<div class="t" style="left:510px;top:720px;font-size:11.0px">11.70</div>
<div class="t" style="left:630px;top:720px;font-size:11.0px">0</div>
<div class="t" style="left:1008px;top:720px;font-size:11.0px">11.70</div>
<div class="t" style="left:1131px;top:720px;font-size:11.0px">0.00</div>
<div class="t" style="left:1217px;top:720px;font-size:11.0px">0.00</div>
<div class="t" style="left:1382px;top:720px;font-size:11.0px">47</div>
<div class="t" style="left:5px;top:739px;font-size:11.0px">7010011206509</div>
<div class="t" style="left:329px;top:738px;font-size:12.0px">накопительный/накопительный</div>
<div class="t" style="left:510px;top:739px;font-size:11.0px">157.70</div>
<div class="t" style="left:630px;top:739px;font-size:11.0px">0</div>
<div class="t" style="left:1008px;top:739px;font-size:11.0px">157.70</div>
<div class="t" style="left:1131px;top:739px;font-size:11.0px">0.00</div>
<div class="t" style="left:1217px;top:739px;font-size:11.0px">0.00</div>
<div class="t" style="left:1382px;top:739px;font-size:11.0px">47</div>
<div class="t" style="left:5px;top:758px;font-size:11.0px">7010011206080</div>
<div class="t" style="left:329px;top:757px;font-size:12.0px">накопительный/накопительный</div>
<div class="t" style="left:510px;top:758px;font-size:11.0px">653.60</div>
<div class="t" style="left:630px;top:758px;font-size:11.0px">0</div>
<div class="t" style="left:1008px;top:758px;font-size:11.0px">653.60</div>
<div class="t" style="left:1131px;top:758px;font-size:11.0px">0.00</div>
<div class="t" style="left:1217px;top:758px;font-size:11.0px">0.00</div>
<div class="t" style="left:1382px;top:758px;font-size:11.0px">47</div>
<div class="t" style="left:5px;top:777px;font-size:11.0px">7010011204901</div>
<div class="t" style="left:329px;top:776px;font-size:12.0px">накопительный/накопительный</div>
<div class="t" style="left:510px;top:777px;font-size:11.0px">4888.70</div>
<div class="t" style="left:630px;top:777px;font-size:11.0px">0</div>
<div class="t" style="left:1008px;top:777px;font-size:11.0px">0.00</div>
<div class="t" style="left:1131px;top:777px;font-size:11.0px">0.00</div>
<div class="t" style="left:1217px;top:777px;font-size:11.0px">0.00</div>
<div class="t" style="left:1382px;top:777px;font-size:11.0px">47</div>
<div class="t" style="left:5px;top:796px;font-size:11.0px">7010011204864</div>
<div class="t" style="left:329px;top:795px;font-size:12.0px">накопительный/накопительный</div>
<div class="t" style="left:510px;top:796px;font-size:11.0px">610.60</div>
<div class="t" style="left:630px;top:796px;font-size:11.0px">0</div>
<div class="t" style="left:1008px;top:796px;font-size:11.0px">610.60</div>
<div class="t" style="left:1131px;top:796px;font-size:11.0px">0.00</div>
<div class="t" style="left:1217px;top:796px;font-size:11.0px">0.00</div>
<div class="t" style="left:1382px;top:796px;font-size:11.0px">47</div>
<div class="t" style="left:5px;top:815px;font-size:11.0px">7010011202594</div>
<div class="t" style="left:329px;top:814px;font-size:12.0px">накопительный/накопительный</div>
<div class="t" style="left:510px;top:815px;font-size:11.0px">339.90</div>
<div class="t" style="left:630px;top:815px;font-size:11.0px">0</div>
<div class="t" style="left:1008px;top:815px;font-size:11.0px">339.90</div>
<div class="t" style="left:1131px;top:815px;font-size:11.0px">0.00</div>
<div class="t" style="left:1217px;top:815px;font-size:11.0px">0.00</div>
<div class="t" style="left:1382px;top:815px;font-size:11.0px">47</div>
<div class="t" style="left:5px;top:834px;font-size:11.0px">7010011202183</div>
<div class="t" style="left:329px;top:833px;font-size:12.0px">накопительный/накопительный</div>
<div class="t" style="left:510px;top:834px;font-size:11.0px">731.30</div>
<div class="t" style="left:630px;top:834px;font-size:11.0px">0</div>
<div class="t" style="left:1008px;top:834px;font-size:11.0px">731.30</div>
<div class="t" style="left:1131px;top:834px;font-size:11.0px">0.00</div>
<div class="t" style="left:1217px;top:834px;font-size:11.0px">0.00</div>
<div class="t" style="left:1382px;top:834px;font-size:11.0px">47</div>
<div class="a" style="left:2px;top:86px;width:1578px;height:21px;background:#fff"></div>
<div class="a" style="left:129px;top:86px;width:1px;height:21px;background:#e5e5e5"></div>
<div class="a" style="left:325px;top:86px;width:1px;height:21px;background:#e5e5e5"></div>
<div class="a" style="left:506px;top:86px;width:1px;height:21px;background:#e5e5e5"></div>
<div class="a" style="left:626px;top:86px;width:1px;height:21px;background:#e5e5e5"></div>
<div class="a" style="left:747px;top:86px;width:1px;height:21px;background:#e5e5e5"></div>
<div class="a" style="left:1004px;top:86px;width:1px;height:21px;background:#e5e5e5"></div>
<div class="a" style="left:1127px;top:86px;width:1px;height:21px;background:#e5e5e5"></div>
<div class="a" style="left:1213px;top:86px;width:1px;height:21px;background:#e5e5e5"></div>
<div class="a" style="left:1378px;top:86px;width:1px;height:21px;background:#e5e5e5"></div>
<div class="a" style="left:1580px;top:86px;width:1px;height:21px;background:#e5e5e5"></div>
<div class="t" style="left:3px;top:91px;width:126px;text-align:center;font-size:11.7px">Штрихкод</div>
<div class="t" style="left:130px;top:92px;width:195px;text-align:center;font-size:10.8px">ФИО</div>
<div class="t" style="left:326px;top:92px;width:180px;text-align:center;font-size:10.85px">Скидка НЕ ЖНВЛС/ЖНВЛС</div>
<div class="t" style="left:507px;top:92px;width:119px;text-align:center;font-size:11.4px">Сумма всех покупок</div>
<div class="t" style="left:627px;top:92px;width:120px;text-align:center;font-size:11.9px">Количество покупок</div>
<div class="t" style="left:748px;top:92px;width:256px;text-align:center;font-size:11.55px">Последнее использование дисконтной карты</div>
<div class="t" style="left:1005px;top:92px;width:122px;text-align:center;font-size:11.35px">Накопленные баллы</div>
<div class="t" style="left:1128px;top:92px;width:85px;text-align:center;font-size:11.25px">Сумма скидки</div>
<div class="t" style="left:1214px;top:92px;width:164px;text-align:center;font-size:11.4px">Сумма потраченных баллов</div>
<div class="t" style="left:1379px;top:92px;width:201px;text-align:center;font-size:11.55px">Тип карты</div>
<div class="a" style="left:748px;top:240px;width:256px;height:1px;background:#000"></div>
<div class="a" style="left:749px;top:241px;width:254px;height:17px;border:1px dotted #8c5f45;border-top:0"></div>
<div class="a" style="left:1581px;top:86px;width:17px;height:750px;background:#f0f0f0;border-left:1px solid #fff"></div>
<div class="a" style="left:1582px;top:103px;width:15px;height:272px;background:#cdcdcd"></div>
<svg class="a" style="left:1585px;top:92px" width="9" height="6" viewBox="0 0 9 6"><path d="M1.2 5.2L4.5 1.8L7.8 5.2" fill="none" stroke="#555" stroke-width="2"/></svg>
<svg class="a" style="left:1585px;top:824px" width="9" height="6" viewBox="0 0 9 6"><path d="M1.2 0.8L4.5 4.2L7.8 0.8" fill="none" stroke="#555" stroke-width="2"/></svg>
<div class="a" style="left:1183px;top:377px;width:28px;height:16px;background:rgba(0,0,0,0.42);filter:blur(1.2px)"></div>
<div class="a" style="left:1174px;top:372px;width:34px;height:19px;background:#fff;border:1px solid #767676"></div>
<div class="t" style="left:1180px;top:376px;font-size:11.6px;color:#505050">0.00</div>
<div class="a" style="left:0;top:85px;width:1600px;height:1px;background:#868b92"></div>
<div class="a" style="left:0;top:85px;width:2px;height:751px;background:#7d828a"></div>
<div class="a" style="left:0;top:44px;width:1px;height:41px;background:#7d828a"></div>
<div class="a" style="left:1598px;top:44px;width:2px;height:792px;background:#7d828a"></div>
<div class="a" style="left:0;top:836px;width:1600px;height:2px;background:#7d828a"></div>
<div class="a" style="left:3px;top:84px;width:1567px;height:32px;border:5px solid #e3362e;border-radius:8px"></div>
<div class="a" style="left:0;top:838px;width:1600px;height:22px;background:#f0f0f0"></div>
<div class="t" style="left:0px;top:843px;font-size:11.76px;font-weight:bold">Оператор:</div>
<div class="t" style="left:62.5px;top:844px;font-size:10.7px">Олег П.</div>
<div class="t" style="left:113.5px;top:843px;font-size:11.76px;letter-spacing:0.05px;font-weight:bold">Склад:</div>
<div class="t" style="left:157.5px;top:844px;font-size:11.5px">13941 | г. Красно...</div>
<div class="t" style="left:269.5px;top:843px;font-size:11.76px;font-weight:bold;transform:scaleX(0.888);transform-origin:0 0">Версия FX:</div>
<div class="t" style="left:331px;top:844px;font-size:11.22px">(сборка от 15.01.2025 18:00:04,17)</div>
<div class="t" style="left:1369px;top:844px;font-size:11px;font-weight:bold;color:#f52a2a">ГИСМТ</div>
<div class="t" style="left:1413px;top:844px;font-size:11px;letter-spacing:0.66px;font-weight:bold;color:#f52a2a">МДЛП</div>
<div class="t" style="left:1513px;top:844px;font-size:10.8px;color:#0f8420">Сервис доступен</div>
<svg class="a" style="left:1458px;top:841px" width="16" height="16" viewBox="0 0 16 16"><circle cx="8" cy="8" r="7.2" fill="#eccb58"/><circle cx="8" cy="8" r="5.9" fill="none" stroke="#fbefc4" stroke-width="0.7"/><path d="M4 8h7M4 8l2.5-2M4 8l2.5 2" stroke="#fff" stroke-width="1.6" fill="none"/></svg>
<svg class="a" style="left:1487px;top:841px" width="16" height="16" viewBox="0 0 16 16"><circle cx="8" cy="8" r="7.2" fill="#eccb58"/><circle cx="8" cy="8" r="5.9" fill="none" stroke="#fbefc4" stroke-width="0.7"/><path d="M5 8h7M12 8l-2.5-2M12 8l-2.5 2" stroke="#fff" stroke-width="1.6" fill="none"/></svg>
</body></html>
